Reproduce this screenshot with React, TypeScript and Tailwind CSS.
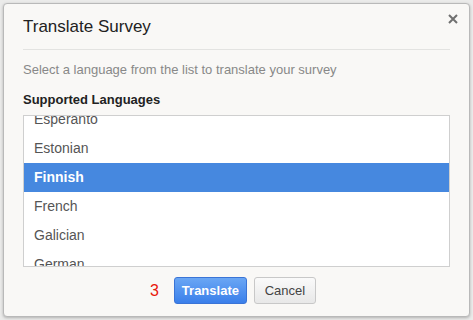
import { useState } from 'react'

const languages = ['Esperanto', 'Estonian', 'Finnish', 'French', 'Galician', 'German', 'Georgian']

export default function App() {
  const [selected, setSelected] = useState('Finnish')

  return (
    <div className="w-[473px] h-[320px] bg-[#ebebea] p-[3px] font-['Liberation_Sans',Arial,sans-serif]">
      <div className="w-[467px] h-[314px] flex flex-col bg-[#f9f8f6] border border-[#b9b9b9] rounded-[4px] shadow-[0_1px_3px_rgba(0,0,0,0.25)]">
        {/* Header */}
        <div className="flex items-start justify-between pl-[19px] pr-[11px] pt-[12px] pb-[11px]">
          <h1 className="text-[17px] leading-[22px] text-[#222]">Translate Survey</h1>
          <button className="mt-[-2px] text-[#777]">
            <svg width="10" height="10" viewBox="0 0 10 10">
              <path d="M1 1L9 9M9 1L1 9" stroke="#707070" strokeWidth="2" />
            </svg>
          </button>
        </div>
        <div className="mx-[19px] h-px bg-[#e3e3e1]" />

        {/* Body */}
        <div className="px-[19px]">
          <p className="mt-[12px] text-[13px] leading-[16px] text-[#888]">
            Select a language from the list to translate your survey
          </p>
          <h2 className="mt-[14px] text-[13px] leading-[16px] font-bold text-[#222]">Supported Languages</h2>
          <div className="mt-[7px] h-[152px] bg-white border border-[#cfcfcf] overflow-hidden">
            <div className="-mt-[11px]">
              {languages.map((lang) => (
                <div
                  key={lang}
                  onClick={() => setSelected(lang)}
                  className={
                    lang === selected
                      ? 'h-[29px] flex items-center px-[10px] text-[14px] font-bold text-white bg-[#4688df]'
                      : 'h-[29px] flex items-center px-[10px] text-[14px] text-[#555]'
                  }
                >
                  {lang}
                </div>
              ))}
            </div>
          </div>
        </div>

        {/* Footer */}
        <div className="flex items-center pl-[146px] mt-[10px]">
          <span className="text-[16px] leading-[20px] text-[#e8180c]">3</span>
          <button className="ml-[15px] w-[73px] h-[27px] rounded-[3px] border border-[#3a74d6] bg-gradient-to-b from-[#6aa6f4] to-[#3a7fea] text-[13px] font-bold text-white">
            Translate
          </button>
          <button className="ml-[7px] w-[62px] h-[27px] rounded-[3px] border border-[#c8c8c8] bg-gradient-to-b from-[#fafafa] to-[#e8e8e8] text-[13px] text-[#444]">
            Cancel
          </button>
        </div>
      </div>
    </div>
  )
}
